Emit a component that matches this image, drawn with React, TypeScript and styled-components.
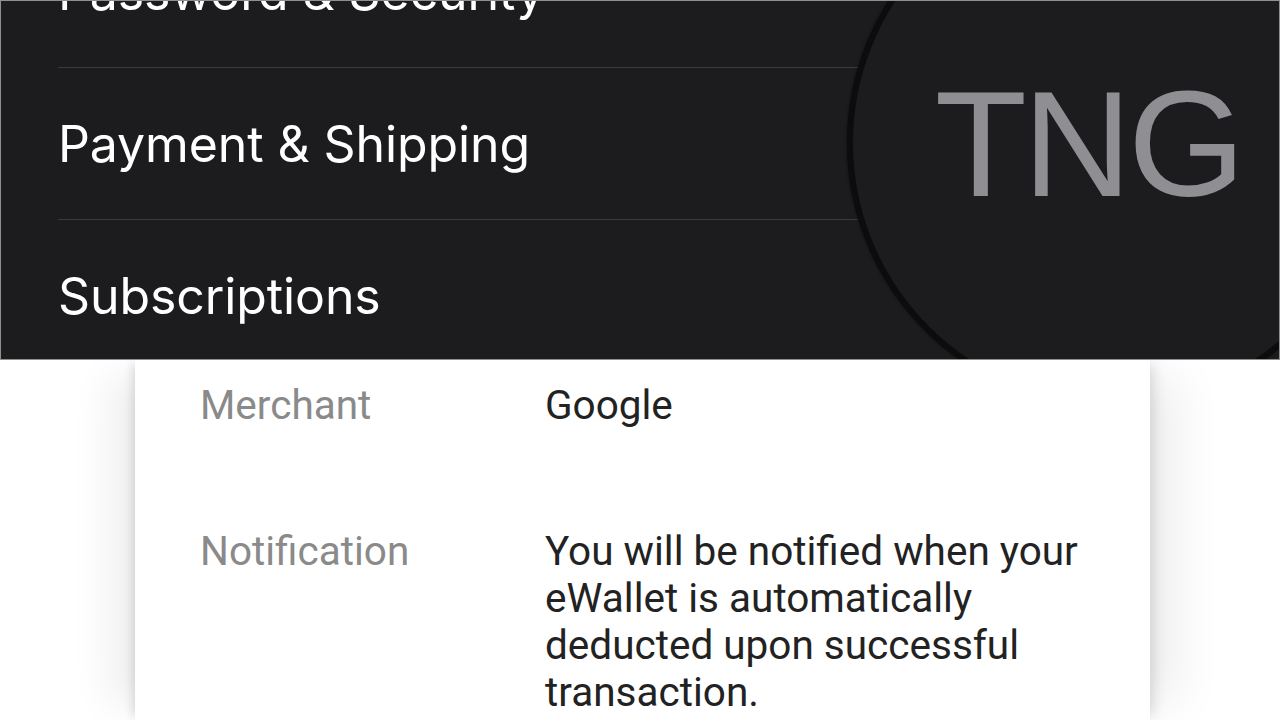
import styled, { createGlobalStyle } from 'styled-components';

const GlobalStyle = createGlobalStyle`
    html, body {
        margin: 0;
        padding: 0;
        background: #ffffff;
    }
    * {
        box-sizing: border-box;
    }
`;

const settingsRows = ['Password & Security', 'Payment & Shipping', 'Subscriptions'];

const details = [
    { label: 'Merchant', value: 'Google' },
    {
        label: 'Notification',
        value: 'You will be notified when your eWallet is automatically deducted upon successful transaction.',
    },
];

const App = () => {
    return (
        <Page>
            <GlobalStyle />
            <TopPanel>
                <Menu>
                    {settingsRows.map((row) => (
                        <MenuRow key={row}>{row}</MenuRow>
                    ))}
                </Menu>
                <Magnifier>
                    <span>TNG</span>
                </Magnifier>
            </TopPanel>
            <BottomPanel>
                <Card>
                    {details.map((item) => (
                        <DetailRow key={item.label}>
                            <div className="label">{item.label}</div>
                            <div className="value">{item.value}</div>
                        </DetailRow>
                    ))}
                </Card>
            </BottomPanel>
        </Page>
    );
};

const Page = styled.div`
    width: 1280px;
    height: 720px;
    overflow: hidden;
    display: flex;
    flex-direction: column;
    background: #ffffff;
`;

const TopPanel = styled.div`
    position: relative;
    height: 360px;
    flex-shrink: 0;
    overflow: hidden;
    background: #1c1c1e;
    border: 1px solid #8f8f8f;
`;

const Menu = styled.div`
    display: flex;
    flex-direction: column;
    margin-top: -85px;
    padding-left: 57px;
`;

const MenuRow = styled.div`
    display: flex;
    align-items: center;
    height: 152px;
    border-bottom: 1px solid #3a3a3c;
    font-family: Inter, 'Liberation Sans', sans-serif;
    font-size: 50px;
    color: #ffffff;
    letter-spacing: -0.1px;
`;

const Magnifier = styled.div`
    position: absolute;
    left: 846px;
    top: -123px;
    width: 530px;
    height: 530px;
    border-radius: 50%;
    border: 6px solid #0c0c0d;
    box-shadow: 0 0 3px rgba(0, 0, 0, 0.6);
    background: #1c1c1e;
    display: flex;
    align-items: center;
    justify-content: center;
    padding-right: 48px;
    padding-top: 2px;

    span {
        font-family: 'Liberation Sans', Arial, sans-serif;
        font-size: 151px;
        color: #8e8e93;
        letter-spacing: -4px;
    }
`;

const BottomPanel = styled.div`
    flex: 1;
    overflow: hidden;
    background: #ffffff;
    display: flex;
`;

const Card = styled.div`
    margin-left: 135px;
    width: 1015px;
    background: #ffffff;
    padding: 22px 0 0 65px;
    display: flex;
    flex-direction: column;
    gap: 99px;
    box-shadow: -6px 0 10px -4px rgba(0, 0, 0, 0.14), 8px 0 12px -4px rgba(0, 0, 0, 0.12),
        -40px 0 40px -16px rgba(0, 0, 0, 0.07), 44px 0 44px -16px rgba(0, 0, 0, 0.07);
`;

const DetailRow = styled.div`
    display: grid;
    grid-template-columns: 345px 560px;
    font-family: Roboto, 'Liberation Sans', sans-serif;
    font-size: 40.5px;
    line-height: 47px;

    .label {
        color: #8a8a8a;
    }

    .value {
        color: #222222;
    }
`;

export default App;
